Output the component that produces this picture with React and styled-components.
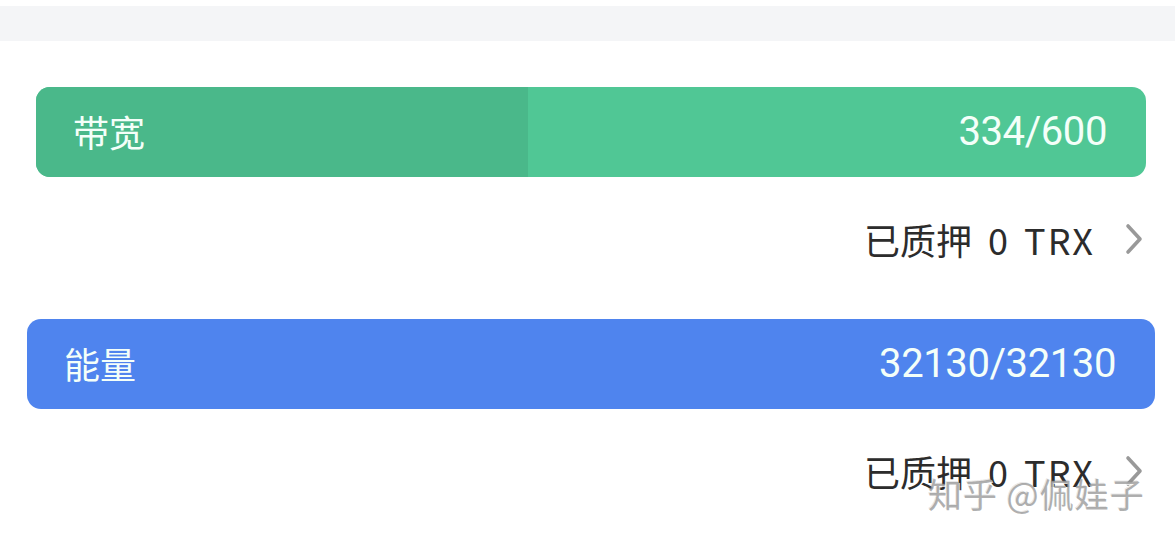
import React from "react";
import styled, { createGlobalStyle } from "styled-components";

const Global = createGlobalStyle`
  html, body { margin: 0; padding: 0; background: #ffffff; }
  body { font-family: "Noto Sans CJK SC", "Noto Sans", sans-serif; }
`;

const Page = styled.div`
  position: relative;
  width: 1175px;
  height: 545px;
  overflow: hidden;
  padding-top: 6px;
  box-sizing: border-box;
`;

const TopBand = styled.div`
  height: 35px;
  background: #f4f5f7;
`;

const Section = styled.section`
  display: flex;
  flex-direction: column;
`;

const Bar = styled.div`
  position: relative;
  height: 90px;
  margin: ${(p) => p.$top}px ${(p) => p.$right}px 0 ${(p) => p.$left}px;
  border-radius: 14px;
  background: ${(p) => p.$color};
  overflow: hidden;
  display: flex;
  align-items: center;
  justify-content: space-between;
  padding: 0 39px 0 37px;
  color: #f4fff9;
`;

const Used = styled.div`
  position: absolute;
  left: 0;
  top: 0;
  bottom: 0;
  background: ${(p) => p.$color};
`;

const Label = styled.span`
  position: relative;
  font-family: "Noto Sans CJK SC", sans-serif;
  font-size: 36px;
  line-height: 1;
  margin-top: -2px;
`;

const Value = styled.span`
  position: relative;
  font-family: Roboto, "Noto Sans", sans-serif;
  font-size: 40px;
  line-height: 1;
  letter-spacing: -0.4px;
`;

const StakeRow = styled.div`
  height: 142px;
  box-sizing: border-box;
  padding: 37px 32px 0 0;
  display: flex;
  align-items: flex-start;
  justify-content: flex-end;
  gap: 30px;
`;

const StakeText = styled.span`
  font-family: "Noto Sans CJK SC", sans-serif;
  font-size: 36px;
  line-height: 50px;
  color: #2c2c2c;
  white-space: nowrap;
`;

const Amount = styled.span`
  margin-left: 16px;
  letter-spacing: 2px;
  word-spacing: 4px;
`;

const Chevron = styled.svg`
  width: 18px;
  height: 32px;
  margin-top: 9px;
  flex: none;
`;

const Watermark = styled.div`
  position: absolute;
  left: 928px;
  top: 472px;
  font-family: "Noto Sans CJK SC", sans-serif;
  font-size: 34px;
  line-height: 44px;
  color: rgba(150, 150, 150, 0.75);
  text-shadow: 1px 1px 0 rgba(255, 255, 255, 0.8), -1px -1px 0 rgba(80, 80, 80, 0.15);
  letter-spacing: 1px;
  white-space: nowrap;
  pointer-events: none;
`;

const resources = [
  {
    key: "bw",
    label: "带宽",
    used: 334,
    total: 600,
    color: "#50c795",
    usedColor: "#4ab88a",
    top: 46,
    left: 36,
    right: 29,
  },
  {
    key: "en",
    label: "能量",
    used: 32130,
    total: 32130,
    color: "#4f84ee",
    usedColor: "#4f84ee",
    top: 0,
    left: 27,
    right: 20,
  },
];

function ChevronIcon() {
  return (
    <Chevron viewBox="0 0 18 32" fill="none">
      <path d="M3 3 L15 16 L3 29" stroke="#999999" strokeWidth="3.6" strokeLinecap="round" strokeLinejoin="round" />
    </Chevron>
  );
}

export default function App() {
  return (
    <>
      <Global />
      <Page>
        <TopBand />
        {resources.map((r) => (
          <Section key={r.key}>
            <Bar $color={r.color} $top={r.top} $left={r.left} $right={r.right}>
              <Used $color={r.usedColor} style={{ width: `${((r.total - r.used) / r.total) * 100}%` }} />
              <Label>{r.label}</Label>
              <Value>
                {r.used}/{r.total}
              </Value>
            </Bar>
            <StakeRow>
              <StakeText>
                已质押<Amount>0 TRX</Amount>
              </StakeText>
              <ChevronIcon />
            </StakeRow>
          </Section>
        ))}
        <Watermark>知乎 @佩娃子</Watermark>
      </Page>
    </>
  );
}
